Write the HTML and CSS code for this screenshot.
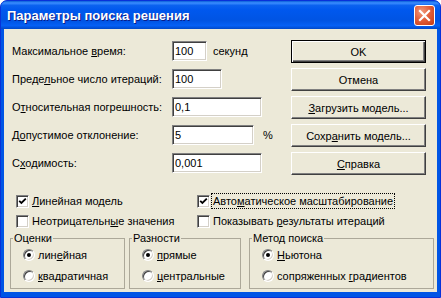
FILE: index.html
```html
<!DOCTYPE html>
<html lang="ru">
<head>
    <meta charset="UTF-8">
    <title>Параметры поиска решения</title>
    <link rel="stylesheet" href="styles.css">
</head>
<body>
    <div class="window">
        <div class="titlebar">
            <span class="title">Параметры поиска решения</span>
            <span class="close">
                <svg width="19" height="19" viewBox="0 0 19 19">
                    <path d="M5 5 L14 14 M14 5 L5 14" stroke="#fff" stroke-width="2.2" stroke-linecap="square" fill="none"/>
                </svg>
            </span>
        </div>
        <div class="client">
            <div class="top">
                <div class="fields">
                    <div class="row">
                        <label class="caption">Максимальное <u>в</u>ремя:</label>
                        <input class="edit w-time" type="text" value="100">
                        <span class="unit">секунд</span>
                    </div>
                    <div class="row">
                        <label class="caption">Преде<u>л</u>ьное число итераций:</label>
                        <input class="edit w-iter" type="text" value="100">
                    </div>
                    <div class="row">
                        <label class="caption">О<u>т</u>носительная погрешность:</label>
                        <input class="edit w-long" type="text" value="0,1">
                    </div>
                    <div class="row">
                        <label class="caption">Д<u>о</u>пустимое отклонение:</label>
                        <input class="edit w-dev" type="text" value="5">
                        <span class="unit pct">%</span>
                    </div>
                    <div class="row">
                        <label class="caption">С<u>х</u>одимость:</label>
                        <input class="edit w-long" type="text" value="0,001">
                    </div>
                </div>
                <div class="buttons">
                    <button class="btn default">OK</button>
                    <button class="btn">Отмена</button>
                    <button class="btn"><u>З</u>агрузить модель...</button>
                    <button class="btn">Сохр<u>а</u>нить модель...</button>
                    <button class="btn"><u>С</u>правка</button>
                </div>
            </div>

            <div class="checks">
                <div class="check-item">
                    <span class="box"><svg width="9" height="9" viewBox="0 0 9 9"><path d="M1.2 3.8 L3.4 6 L7.8 1.6" stroke="#000" stroke-width="1.8" fill="none"/></svg></span>
                    <span class="check-label"><u>Л</u>инейная модель</span>
                </div>
                <div class="check-item">
                    <span class="box"><svg width="9" height="9" viewBox="0 0 9 9"><path d="M1.2 3.8 L3.4 6 L7.8 1.6" stroke="#000" stroke-width="1.8" fill="none"/></svg></span>
                    <span class="check-label focused">Авто<u>м</u>атическое масштабирование</span>
                </div>
                <div class="check-item">
                    <span class="box"></span>
                    <span class="check-label">Неотрицательн<u>ы</u>е значения</span>
                </div>
                <div class="check-item">
                    <span class="box"></span>
                    <span class="check-label">Показывать <u>р</u>езультаты итераций</span>
                </div>
            </div>

            <div class="groups">
                <fieldset class="group g-est">
                    <legend>Оценки</legend>
                    <div class="radio-item"><span class="radio on"></span><span class="radio-label">лин<u>е</u>йная</span></div>
                    <div class="radio-item"><span class="radio"></span><span class="radio-label"><u>к</u>вадратичная</span></div>
                </fieldset>
                <fieldset class="group g-diff">
                    <legend>Разности</legend>
                    <div class="radio-item"><span class="radio on"></span><span class="radio-label"><u>п</u>рямые</span></div>
                    <div class="radio-item"><span class="radio"></span><span class="radio-label"><u>ц</u>ентральные</span></div>
                </fieldset>
                <fieldset class="group g-method">
                    <legend>Метод поиска</legend>
                    <div class="radio-item"><span class="radio on"></span><span class="radio-label"><u>Н</u>ьютона</span></div>
                    <div class="radio-item"><span class="radio"></span><span class="radio-label">сопряженных <u>г</u>радиентов</span></div>
                </fieldset>
            </div>
        </div>
    </div>
</body>
</html>
```

FILE: styles.css
```css
* {
    box-sizing: border-box;
}
body {
    margin: 0;
    background: #fff;
    font-family: "Liberation Sans", Arial, sans-serif;
    font-size: 11px;
    color: #000;
}
.window {
    width: 441px;
    height: 298px;
    display: flex;
    flex-direction: column;
    background: #0055e5;
    border: 1px solid #0831d9;
    border-radius: 7px 7px 0 0;
    overflow: hidden;
}
.titlebar {
    height: 28px;
    flex: none;
    display: flex;
    align-items: center;
    justify-content: space-between;
    padding: 0 5px 0 6px;
    background: linear-gradient(#0a5fd8 0%, #3b8dff 7%, #0b62ef 16%, #0058ee 32%, #0054e3 70%, #0560f5 88%, #0048c8 100%);
}
.title {
    color: #fff;
    font-weight: bold;
    font-size: 13px;
    text-shadow: 1px 1px #0a1d8a;
}
.close {
    width: 21px;
    height: 21px;
    display: flex;
    align-items: center;
    justify-content: center;
    border: 1px solid #fff;
    border-radius: 3px;
    background: radial-gradient(circle at 35% 30%, #f29a7c 0%, #e2603c 45%, #c53a12 100%);
}
.client {
    flex: 1;
    margin: 0 3px 5px;
    padding: 11px 0 0 8px;
    background: #ece9d8;
}
.top {
    display: flex;
}
.fields {
    width: 279px;
}
.row {
    height: 22px;
    margin-bottom: 6px;
    display: flex;
    align-items: center;
}
.caption {
    width: 160px;
}
.edit {
    height: 20px;
    padding: 0 2px;
    font: inherit;
    color: #000;
    background: #fff;
    border: 1px solid;
    border-color: #808080 #fff #fff #808080;
    box-shadow: inset 1px 1px #404040, inset -1px -1px #d4d0c8;
    outline: none;
}
.w-time {
    width: 35px;
}
.w-iter {
    width: 50px;
}
.w-long {
    width: 90px;
}
.w-dev {
    width: 82px;
}
.unit {
    margin-left: 6px;
}
.pct {
    margin-left: 9px;
}
.buttons {
    display: flex;
    flex-direction: column;
}
.btn {
    width: 135px;
    height: 23px;
    margin-bottom: 5px;
    padding: 0;
    font: inherit;
    color: #000;
    background: #ece9d8;
    border: 1px solid;
    border-color: #fff #404040 #404040 #fff;
    box-shadow: inset -1px -1px #808080;
}
.btn.default {
    border-color: #000;
    box-shadow: inset 1px 1px #fff, inset -1px -1px #404040, inset -2px -2px #808080;
}
.checks {
    margin-top: 13px;
    padding-left: 4px;
    display: grid;
    grid-template-columns: 181px auto;
    row-gap: 4px;
}
.check-item {
    height: 16px;
    display: flex;
    align-items: center;
}
.box {
    width: 13px;
    height: 13px;
    margin-right: 2px;
    display: flex;
    align-items: center;
    justify-content: center;
    background: #fff;
    border: 1px solid;
    border-color: #808080 #fff #fff #808080;
    box-shadow: inset 1px 1px #404040, inset -1px -1px #d4d0c8;
}
.check-label {
    padding: 0 1px;
    line-height: 14px;
}
.focused {
    outline: 1px dotted #000;
}
.groups {
    display: flex;
    margin: 3px 0 0 -2px;
}
.group {
    margin: 0;
    min-width: 0;
    padding: 2px 0 4px 2px;
    border: 1px solid #aca899;
}
.group legend {
    padding: 0 1px;
    line-height: 13px;
}
.g-est {
    width: 115px;
}
.g-diff {
    width: 112px;
    margin-left: 4px;
}
.g-method {
    width: 185px;
    margin-left: 8px;
}
.radio-item {
    height: 16px;
    padding-left: 10px;
    display: flex;
    align-items: center;
}
.radio-item + .radio-item {
    margin-top: 5px;
}
.radio {
    width: 12px;
    height: 12px;
    margin-right: 3px;
    display: flex;
    align-items: center;
    justify-content: center;
    border-radius: 50%;
    background: #fff;
    border: 1px solid;
    border-color: #808080 #fff #fff #808080;
    box-shadow: inset 1px 1px #404040, inset -1px -1px #d4d0c8;
}
.radio.on::after {
    content: "";
    width: 4px;
    height: 4px;
    border-radius: 50%;
    background: #000;
}
```
